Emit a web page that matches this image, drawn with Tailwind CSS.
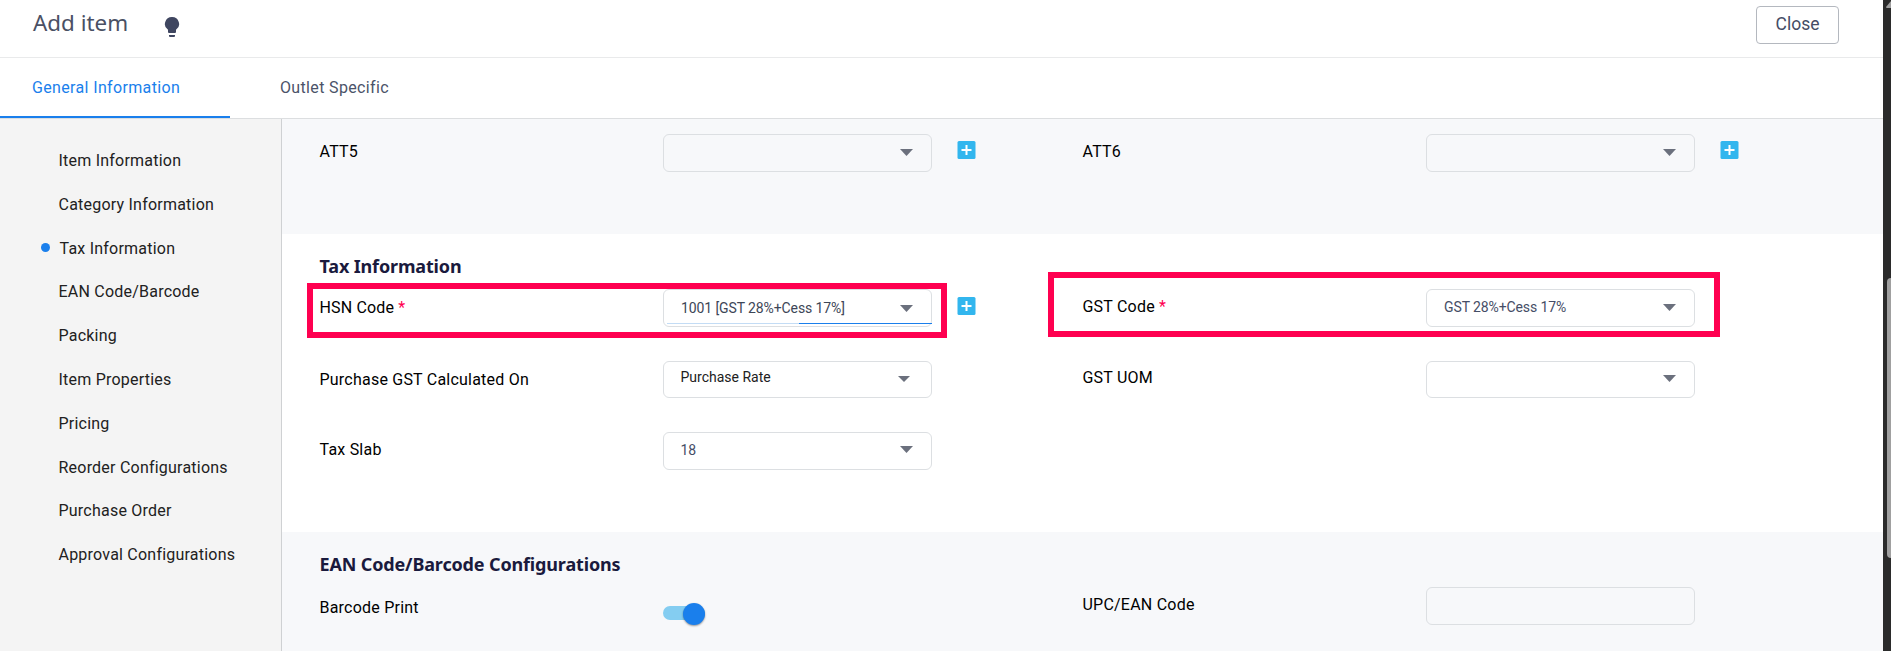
<!DOCTYPE html>
<html lang="en">
<head>
  <meta charset="UTF-8" />
  <meta name="viewport" content="width=device-width, initial-scale=1.0"/>
  <title>Add item</title>
  <script src="https://cdn.jsdelivr.net/npm/@tailwindcss/browser@4"></script>
</head>
<body class="flex h-[651px] overflow-hidden bg-[#2b2b2b] font-[Roboto,sans-serif] text-base text-black">

  <div class="flex h-full w-[1883px] flex-col bg-white">

    <!-- Header -->
    <header class="flex h-[58px] shrink-0 items-start justify-between border-b border-[#e9eaeb] pl-[33px] pr-[44px]">
      <div class="flex items-start">
        <h1 class="w-[131px] pt-[7px] font-['Noto_Sans',sans-serif] text-[22.4px] leading-8 text-[#4a5064]">Add item</h1>
        <svg class="mt-[15px] h-[24px] w-[16px]" viewBox="0 0 16 24" fill="#3f4660"><path d="M8 2a7 7 0 0 0-4 12.8V17a1 1 0 0 0 1 1h6a1 1 0 0 0 1-1v-2.2A7 7 0 0 0 8 2zM5 20h6v1a1 1 0 0 1-1 1H6a1 1 0 0 1-1-1z"/></svg>
      </div>
      <button class="mt-[6px] h-[38px] w-[83px] rounded border border-[#b4b8bf] pb-[2px] text-[17.5px] text-[#454d66]">Close</button>
    </header>

    <!-- Tabs -->
    <nav class="flex h-[61px] shrink-0 border-b border-[#dcdee0] tracking-[0.35px]">
      <a class="w-[230px] border-b-2 border-[#1a7fec] pt-[18px] pl-8 text-[#1a7fec]">General Information</a>
      <a class="pt-[18px] pl-[50px] text-[#4b5369]">Outlet Specific</a>
    </nav>

    <div class="flex min-h-0 flex-1">

      <!-- Section menu -->
      <aside class="w-[282px] shrink-0 border-r border-[#cfd1d3] bg-[#f4f4f4] pt-[30px] pl-[58.5px] text-[#212121]">
        <ul class="tracking-[0.22px]">
          <li class="h-[43.8px]">Item Information</li>
          <li class="h-[43.8px]">Category Information</li>
          <li class="-ml-[17.5px] flex h-[43.8px]"><span class="mt-[6px] mr-[9.5px] size-[9px] rounded-full bg-[#1a7fec]"></span>Tax Information</li>
          <li class="h-[43.8px]">EAN Code/Barcode</li>
          <li class="h-[43.8px]">Packing</li>
          <li class="h-[43.8px]">Item Properties</li>
          <li class="h-[43.8px]">Pricing</li>
          <li class="h-[43.8px]">Reorder Configurations</li>
          <li class="h-[43.8px]">Purchase Order</li>
          <li class="h-[43.8px]">Approval Configurations</li>
        </ul>
      </aside>

      <main class="flex-1 tracking-[0.22px]">

        <!-- Attributes -->
        <section class="h-[115px] bg-[#f7f8fa] pt-[15px] pl-[37.5px]">
          <div class="flex items-start">
            <label class="w-[343.5px] pt-[6px]">ATT5</label>
            <div class="flex h-[38px] w-[269px] justify-end rounded-md border border-[#dcdfe2] pr-[18px]">
              <svg class="mt-[14px] h-[7px] w-[13px]" viewBox="0 0 13 7" fill="#6b707d"><path d="M0 0h13L6.5 7z"/></svg>
            </div>
            <svg class="mt-[7px] ml-[25px] h-[18px] w-[19px]" viewBox="0 0 19 18"><rect x=".5" width="18" height="18" rx="1.5" fill="#32b6ee"/><path d="M9.5 4v10M4.5 9h10" stroke="#fff" stroke-width="2"/></svg>
            <label class="ml-[106.5px] w-[343.5px] pt-[6px]">ATT6</label>
            <div class="flex h-[38px] w-[269px] justify-end rounded-md border border-[#dcdfe2] pr-[18px]">
              <svg class="mt-[14px] h-[7px] w-[13px]" viewBox="0 0 13 7" fill="#6b707d"><path d="M0 0h13L6.5 7z"/></svg>
            </div>
            <svg class="mt-[7px] ml-[25px] h-[18px] w-[19px]" viewBox="0 0 19 18"><rect x=".5" width="18" height="18" rx="1.5" fill="#32b6ee"/><path d="M9.5 4v10M4.5 9h10" stroke="#fff" stroke-width="2"/></svg>
          </div>
        </section>

        <!-- Tax information -->
        <section class="relative h-[298px] bg-white pt-5 pl-[37.5px]">
          <h2 class="h-[35px] font-['Noto_Sans',sans-serif] text-[18px] leading-6 font-bold tracking-[-0.15px] text-[#1a1a3d]">Tax Information</h2>
          <div class="flex h-[72px] items-start">
            <label class="w-[343.5px] pt-[7px] tracking-[0.15px]">HSN Code <span class="text-[#ff0050]">*</span></label>
            <div class="relative flex h-[38px] w-[269px] justify-between rounded-md border border-[#dcdfe2] pr-[18px] pl-[17px]">
              <span class="pt-[8px] text-sm tracking-[-0.1px] text-[#3d4657]">1001 [GST 28%+Cess 17%]</span>
              <svg class="mt-[15px] h-[7px] w-[13px]" viewBox="0 0 13 7" fill="#6b707d"><path d="M0 0h13L6.5 7z"/></svg>
              <div class="absolute top-[33px] left-[3px] flex h-px w-[265px] bg-[#c3dcf5]"><div class="ml-auto w-[133px] bg-[#1a7fec]"></div></div>
            </div>
            <svg class="mt-[8px] ml-[25px] h-[18px] w-[19px]" viewBox="0 0 19 18"><rect x=".5" width="18" height="18" rx="1.5" fill="#32b6ee"/><path d="M9.5 4v10M4.5 9h10" stroke="#fff" stroke-width="2"/></svg>
            <label class="ml-[106.5px] w-[343.5px] pt-[6px]">GST Code <span class="text-[#ff0050]">*</span></label>
            <div class="flex h-[38px] w-[269px] justify-between rounded-md border border-[#dcdfe2] pr-[18px] pl-[17px]">
              <span class="pt-[7px] text-sm tracking-[-0.1px] text-[#454d66]">GST 28%+Cess 17%</span>
              <svg class="mt-[14px] h-[7px] w-[13px]" viewBox="0 0 13 7" fill="#6b707d"><path d="M0 0h13L6.5 7z"/></svg>
            </div>
          </div>
          <div class="flex h-[71px] items-start">
            <label class="w-[343.5px] pt-[7px]">Purchase GST Calculated On</label>
            <div class="flex h-[37px] w-[269px] justify-between rounded-md border border-[#dcdfe2] pr-[21px] pl-[16.5px]">
              <span class="pt-[5px] text-sm tracking-normal text-[#212121]">Purchase Rate</span>
              <svg class="mt-[14px] h-[6px] w-[12px]" viewBox="0 0 12 6" fill="#6b707d"><path d="M0 0h12L6 6z"/></svg>
            </div>
            <label class="ml-[150.5px] w-[343.5px] pt-[5px]">GST UOM</label>
            <div class="flex h-[37px] w-[269px] justify-end rounded-md border border-[#dcdfe2] pr-[18px]">
              <svg class="mt-[13px] h-[7px] w-[13px]" viewBox="0 0 13 7" fill="#6b707d"><path d="M0 0h13L6.5 7z"/></svg>
            </div>
          </div>
          <div class="flex items-start">
            <label class="w-[343.5px] pt-[6px]">Tax Slab</label>
            <div class="flex h-[38px] w-[269px] justify-between rounded-md border border-[#dcdfe2] pr-[18px] pl-[16.5px]">
              <span class="pt-[7px] text-sm tracking-normal text-[#454d66]">18</span>
              <svg class="mt-[13px] h-[7px] w-[13px]" viewBox="0 0 13 7" fill="#6b707d"><path d="M0 0h13L6.5 7z"/></svg>
            </div>
          </div>

          <!-- Highlight boxes over the two code fields -->
          <div class="absolute top-[49px] left-[25px] h-[55px] w-[640px] border-6 border-[#ff0050]"></div>
          <div class="absolute top-[37.5px] left-[765.5px] h-[65px] w-[672.5px] border-6 border-[#ff0050]"></div>
        </section>

        <!-- Barcode configurations -->
        <section class="h-[119px] bg-[#f7f8fa] pt-5 pl-[37.5px]">
          <h2 class="h-[35px] font-['Noto_Sans',sans-serif] text-[18px] leading-6 font-bold tracking-[-0.15px] text-[#1a1a3d]">EAN Code/Barcode Configurations</h2>
          <div class="flex items-start">
            <label class="w-[343.5px] pt-[9px]">Barcode Print</label>
            <div class="mt-[19px] flex h-[14px] w-[42px] items-center justify-end rounded-full bg-[#84cdf1]">
              <div class="mt-px size-[22px] shrink-0 rounded-full bg-[#1a7fec] shadow-[0_1px_2px_rgba(0,0,0,0.4)]"></div>
            </div>
            <label class="ml-[377.5px] w-[343.5px] pt-[6px]">UPC/EAN Code</label>
            <div class="h-[38px] w-[269px] rounded-md border border-[#dcdfe2]"></div>
          </div>
        </section>
      </main>
    </div>
  </div>

  <!-- Page scrollbar -->
  <div class="flex flex-1 flex-col items-end">
    <svg class="h-[10px] w-[5px]" viewBox="0 0 5 10" fill="#9e9e9e"><path d="M5 1L0 7q0 1 1 1h4z"/></svg>
    <div class="mt-[268px] h-[280px] w-[4px] rounded-l bg-[#a0a0a0]"></div>
  </div>

</body>
</html>
